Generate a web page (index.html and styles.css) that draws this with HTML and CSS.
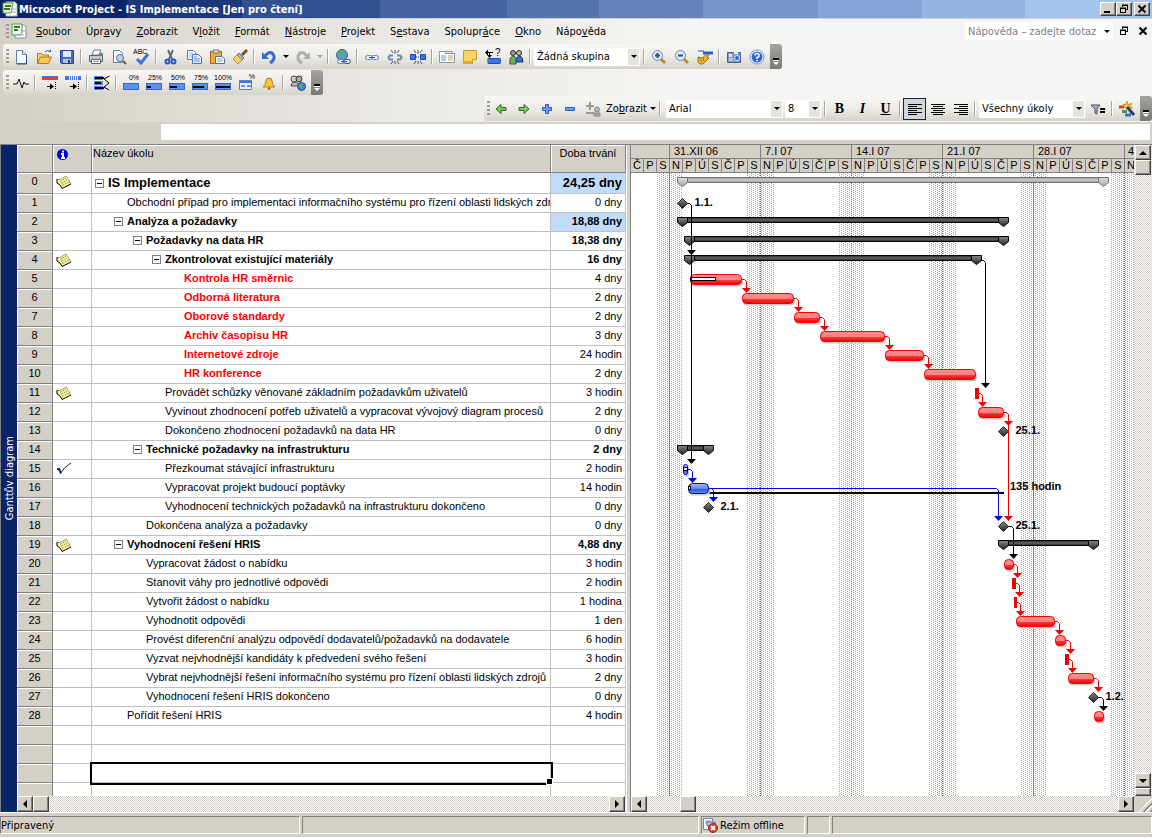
FILE: index.html
```html
<!DOCTYPE html>
<html lang="cs">
<head>
  <meta charset="UTF-8">
  <meta name="viewport" content="width=device-width, initial-scale=1.0">
  <title>Microsoft Project - IS Implementace [Jen pro čtení]</title>
  <link rel="stylesheet" href="styles.css">
</head>
<body>

<header class="titlebar">
  <svg class="icon" viewBox="0 0 16 16"><path d="M4 1h9l2 2v12H4z" fill="#fff" stroke="#a9b8a0"/><path d="M1 2h10l-2 10H1z" fill="#e8f4e0" stroke="#5c9a4a"/><path d="M3 5h6M2 8h6" stroke="#2f7a2a" stroke-width="2"/><path d="M9 8h5M9 11h5" stroke="#8aa" /></svg>
  <h1>Microsoft Project - IS Implementace [Jen pro čtení]</h1>
  <div class="window-buttons">
    <button type="button" aria-label="Minimalizovat"><svg viewBox="0 0 12 10"><path d="M2 8h6" stroke="#000" stroke-width="2"/></svg></button>
    <button type="button" aria-label="Obnovit"><svg viewBox="0 0 12 10"><path d="M4 1.500h6M4.500 1v2M9.500 1v5M8 5.500h2M2 4.500h6M2.500 4v5M7.500 4v5M2 8.500h6" stroke="#000" fill="none"/><path d="M4 1h6M2 4h6" stroke="#000"/></svg></button>
    <button type="button" class="close" aria-label="Zavřít"><svg viewBox="0 0 12 10"><path d="M2.500 1.500l7 7M9.500 1.500l-7 7" stroke="#000" stroke-width="2"/></svg></button>
  </div>
</header>

<div class="bars">
  <nav class="menubar">
    <span class="grip"></span>
    <svg class="icon menu-icon" viewBox="0 0 16 16"><path d="M4 2h9l2 2v11H4z" fill="#fff" stroke="#7a92b8"/><path d="M1 1h10v9l-2 2H1z" fill="#eef6e8" stroke="#5c9a4a"/><path d="M3 4h6M3 7h4" stroke="#2f7a2a" stroke-width="2"/><path d="M10 8h4M7 12h6" stroke="#8ba0c0"/></svg>
    <a href="#"><u>S</u>oubor</a>
    <a href="#">Úpr<u>a</u>vy</a>
    <a href="#"><u>Z</u>obrazit</a>
    <a href="#">V<u>l</u>ožit</a>
    <a href="#"><u>F</u>ormát</a>
    <a href="#"><u>N</u>ástroje</a>
    <a href="#"><u>P</u>rojekt</a>
    <a href="#">S<u>e</u>stava</a>
    <a href="#">Spolupr<u>á</u>ce</a>
    <a href="#"><u>O</u>kno</a>
    <a href="#">Nápo<u>v</u>ěda</a>
    <div class="menubar-right">
      <label class="combo help"><input type="text" placeholder="Nápověda – zadejte dotaz" aria-label="Nápověda"></label>
      <button type="button" class="flat" aria-label="Obnovit okno"><svg viewBox="0 0 12 10"><path d="M4 1.500h6M4.500 1v2M9.500 1v5M8 5.500h2M2 4.500h6M2.500 4v5M7.500 4v5M2 8.500h6" stroke="#000" fill="none"/><path d="M4 1h6M2 4h6" stroke="#000"/></svg></button>
      <button type="button" class="flat" aria-label="Zavřít okno"><svg viewBox="0 0 12 10"><path d="M2.500 1.500l7 7M9.500 1.500l-7 7" stroke="#000" stroke-width="2"/></svg></button>
    </div>
  </nav>

  <!-- standard toolbar -->
  <div class="toolbar">
    <span class="grip"></span>
    <button type="button" title="Nový"><svg class="icon" viewBox="0 0 16 16"><path d="M3.500 1.500h6l4 4v9h-10z" fill="#fff" stroke="#5b7fb5"/><path d="M9.500 1.500v4h4" fill="#dbe7f7" stroke="#5b7fb5"/><path d="M13.500 6v9H4" stroke="#2d4a7a" fill="none"/></svg></button>
    <button type="button" title="Otevřít"><svg class="icon" viewBox="0 0 16 16"><path d="M1.500 14V4.500h4l1 1.500h6v3" fill="#f7d774" stroke="#a8782a"/><path d="M1.500 14.500l3-6.500h11l-3 6.500z" fill="#ffc94f" stroke="#a8782a"/><path d="M9 3q3-3 5 0" fill="none" stroke="#3c6b9c"/><path d="M12 3h3V0z" fill="#3c6b9c"/></svg></button>
    <button type="button" title="Uložit"><svg class="icon" viewBox="0 0 16 16"><path d="M1.500 1.500h13v13h-12l-1-1z" fill="#4a68c8" stroke="#2a3e94"/><path d="M4 2h8v6H4z" fill="#dce8ff"/><path d="M4 10h8v4H4z" fill="#b8c4dc"/><path d="M9 11h2v3H9z" fill="#2a3e94"/></svg></button>
    <span class="sep"></span>
    <button type="button" title="Tisk"><svg class="icon" viewBox="0 0 16 16"><path d="M4 6l2-5h7l-2 5z" fill="#fff" stroke="#6d7c8c"/><path d="M1.500 6.500h13v6h-13z" fill="#c4c8d0" stroke="#5d6570"/><path d="M3.500 10.500h9v4h-9z" fill="#fff" stroke="#5d6570"/><path d="M11 4h4v3h-4z" fill="#4c9e40"/><path d="M5 12.500h6" stroke="#889"/></svg></button>
    <button type="button" title="Náhled"><svg class="icon" viewBox="0 0 16 16"><path d="M2.500 1.500h6l3 3v9h-9z" fill="#fff" stroke="#5b7fb5"/><circle cx="9" cy="9" r="3.500" fill="#bcd8f4" stroke="#556a8a"/><path d="M12 12l3 3" stroke="#775a30" stroke-width="2"/></svg></button>
    <button type="button" title="Pravopis"><svg class="icon" viewBox="0 0 16 16"><text x="-1" y="5" class="icon-text">ABC</text><path d="M3 10l4 4 7-9" fill="none" stroke="#3f6fd0" stroke-width="3"/></svg></button>
    <span class="sep"></span>
    <button type="button" title="Vyjmout"><svg class="icon" viewBox="0 0 16 16"><path d="M5 1l4 9M10 1L6 10" stroke="#5b6a80" stroke-width="2"/><circle cx="4.500" cy="12.500" r="2" fill="none" stroke="#2457c4" stroke-width="2"/><circle cx="10.500" cy="12.500" r="2" fill="none" stroke="#2457c4" stroke-width="2"/></svg></button>
    <button type="button" title="Kopírovat"><svg class="icon" viewBox="0 0 16 16"><path d="M1.500 1.500h6l2 2v7h-8z" fill="#fff" stroke="#4f76b8"/><path d="M3 4h4M3 6h5M3 8h5" stroke="#8fb0e0"/><path d="M6.500 5.500h6l3 3v6h-9z" fill="#e4eeff" stroke="#4f76b8"/><path d="M8 8h3M8 10h6M8 12h6" stroke="#6f96d8"/></svg></button>
    <button type="button" title="Vložit"><svg class="icon" viewBox="0 0 16 16"><path d="M1.500 2.500h11v12h-11z" fill="#f0a93c" stroke="#a0641c"/><path d="M4 1h6v3H4z" fill="#d8d8d8" stroke="#777"/><path d="M6.500 7.500h6l3 2v5h-9z" fill="#fff" stroke="#56709c"/><path d="M8 10h5M8 12h6" stroke="#7c98c8"/></svg></button>
    <button type="button" title="Kopírovat formát"><svg class="icon" viewBox="0 0 16 16"><path d="M15 1l-5 5" stroke="#7a4f28" stroke-width="3"/><path d="M7 4l5 5-2 2-5-5z" fill="#9ab4dc" stroke="#5a6c90"/><path d="M5 6l5 5-4 4-5-5z" fill="#f7d36a" stroke="#b98a2c"/></svg></button>
    <span class="sep"></span>
    <button type="button" title="Zpět"><svg class="icon" viewBox="0 0 16 16"><path d="M4 7q6-7 9 0 1 4-4 7" fill="none" stroke="#3a6ad4" stroke-width="3"/><path d="M1 3v7h7z" fill="#3a6ad4"/></svg></button>
    <button type="button" class="drop" aria-label="Zpět – seznam"></button>
    <button type="button" title="Znovu"><svg class="icon" viewBox="0 0 16 16"><path d="M12 7q-6-7-9 0-1 4 4 7" fill="none" stroke="#b0aeaa" stroke-width="3"/><path d="M15 3v7H8z" fill="#b0aeaa"/></svg></button>
    <button type="button" class="drop disabled" aria-label="Znovu – seznam"></button>
    <span class="sep"></span>
    <button type="button" title="Hypertextový odkaz"><svg class="icon" viewBox="0 0 16 16"><circle cx="7" cy="6" r="5.500" fill="#5a9ae0" stroke="#3a6090"/><path d="M3 4q2-4 5-2l1 3-3 1-1 3zM9 6l3-1-1 4z" fill="#5cb04c"/><rect x="2.500" y="10.500" width="7" height="4" rx="2" fill="#e4ecf6" stroke="#6080a8"/><rect x="8.500" y="10.500" width="7" height="4" rx="2" fill="#e4ecf6" stroke="#34517c"/><path d="M6 12.500h6" stroke="#34517c"/></svg></button>
    <span class="sep"></span>
    <button type="button" title="Propojit úkoly"><svg class="icon" viewBox="0 0 16 16"><rect x="1.500" y="6.500" width="7" height="4" rx="2" fill="#e4ecf6" stroke="#6f86ac"/><rect x="7.500" y="6.500" width="7" height="4" rx="2" fill="#e4ecf6" stroke="#6f86ac"/><path d="M5 8.500h6" stroke="#34517c"/></svg></button>
    <button type="button" title="Zrušit propojení"><svg class="icon" viewBox="0 0 16 16"><path d="M6 6.500H3q-3 2 0 4h3M10 6.500h3q3 2 0 4h-3" fill="none" stroke="#6f86ac" stroke-width="2"/><path d="M8 1v4M4 1l2 3M12 1l-2 3M8 15v-3M4 15l2-3M12 15l-2-3" stroke="#4a5668"/></svg></button>
    <button type="button" title="Rozdělit úkol"><svg class="icon" viewBox="0 0 16 16"><path d="M.500 5.500h5v5h-5zM10.500 5.500h5v5h-5z" fill="#3a76f0" stroke="#1b48b0"/><path d="M6 8h4" stroke="#1b48b0" stroke-dasharray="1 1"/><path d="M8 1v4M4 1l2 3M12 1l-2 3M8 15v-3M4 15l2-3M12 15l-2-3" stroke="#4a5668"/></svg></button>
    <span class="sep"></span>
    <button type="button" title="Informace o úkolu"><svg class="icon" viewBox="0 0 16 16"><path d="M.500 4.500v-2h6v2h9v9H.500z" fill="#fdfdfa" stroke="#8494ac"/><path d="M7 2.500h6v2" fill="none" stroke="#8494ac"/><path d="M2 7h5M2 9h5M2 11h5" stroke="#6f96d8"/><path d="M9 7h5M9 9h5M9 11h5" stroke="#c8a860"/></svg></button>
    <button type="button" title="Poznámky"><svg class="icon" viewBox="0 0 16 16"><path d="M1.500 1.500h13v9l-4 4h-9z" fill="#fbd45c" stroke="#c89a2c"/><path d="M1 12h9v3H1z" fill="#e0a838"/><path d="M10.500 14.500v-4h4" fill="#fff2b8" stroke="#c89a2c"/></svg></button>
    <button type="button" title="Přiřadit"><svg class="icon" viewBox="0 0 16 16"><path d="M3 3.500h5M4.500 3v4" stroke="#000"/><path d="M0 3.500l3-3v6zM2 6h5l-2.500 3z" fill="#000"/><text x="10" y="7" class="icon-text big">?</text><rect x="2.500" y="9.500" width="13" height="5" rx="1" fill="#3f74e8" stroke="#1b48b0"/><path d="M2 9v6" stroke="#f0e040"/></svg></button>
    <button type="button" title="Přiřadit zdroje"><svg class="icon" viewBox="0 0 16 16"><circle cx="5" cy="4" r="2.500" fill="#999" stroke="#333"/><circle cx="11" cy="4" r="2.500" fill="#bbb" stroke="#222"/><path d="M2 15q-1-8 4-8 3 1 2 8z" fill="#6bb05a" stroke="#2f5c2a"/><path d="M8 13q0-6 4-6 3 1 3 6z" fill="#3a6ad4" stroke="#1d3470"/></svg></button>
    <span class="sep"></span>
    <label class="combo group"><select aria-label="Seskupit podle"><option>Žádná skupina</option></select></label>
    <span class="sep"></span>
    <button type="button" title="Zvětšit"><svg class="icon" viewBox="0 0 16 16"><path d="M10 10l4 4" stroke="#c08a30" stroke-width="3"/><circle cx="6.500" cy="6.500" r="5" fill="#dce9fa" stroke="#7286a8"/><path d="M4 6.500h5M6.500 4v5" stroke="#2f4f90" stroke-width="2"/></svg></button>
    <button type="button" title="Zmenšit"><svg class="icon" viewBox="0 0 16 16"><path d="M10 10l4 4" stroke="#c08a30" stroke-width="3"/><circle cx="6.500" cy="6.500" r="5" fill="#dce9fa" stroke="#7286a8"/><path d="M4 6.500h5" stroke="#2f4f90" stroke-width="2"/></svg></button>
    <button type="button" title="Přejít na vybraný úkol"><svg class="icon" viewBox="0 0 16 16"><path d="M1 2h6" stroke="#7fa4e0" stroke-width="2"/><path d="M6 4h10" stroke="#2a5cd0" stroke-width="3"/><path d="M1 8l4 1 5-4 2 1-2 2 2 1-3 3-3 3H3l-2-2z" fill="#f2b632" stroke="#9c6c14"/><path d="M3 10l2 3M6 9l1 3" stroke="#9c6c14"/></svg></button>
    <span class="sep"></span>
    <button type="button" title="Kopírovat obrázek"><svg class="icon" viewBox="0 0 16 16"><path d="M1.500 3.500h13v10h-13z" fill="#7f9cc4" stroke="#44618e"/><path d="M3 5h3v3H3zM8 2h4v3H8z" fill="#e4ecf8"/><path d="M3 9h4v3H3z" fill="#b6c8e2"/><circle cx="11" cy="9" r="2.500" fill="#2a62d8" stroke="#dfe9f8"/></svg></button>
    <button type="button" title="Nápověda"><svg class="icon" viewBox="0 0 16 16"><circle cx="8" cy="8" r="7" fill="#fff" stroke="#6f92dc"/><circle cx="8" cy="8" r="5.500" fill="#2f66d8"/><path d="M6 6.500q0-2 2-2t2 2-2 2v1.500" fill="none" stroke="#fff" stroke-width="1.500"/><path d="M7 11h2v1H7z" fill="#fff"/></svg></button>
    <button type="button" class="overflow" aria-label="Možnosti panelu"></button>
  </div>

  <!-- tracking toolbar -->
  <div class="toolbar">
    <span class="grip"></span>
    <button type="button" title="Statistika projektu"><svg class="icon" viewBox="0 0 16 16"><path d="M0 9h4l2-5 3 9 2-6 1 2h4" fill="none" stroke="#111"/></svg></button>
    <span class="sep"></span>
    <button type="button" title="Aktualizovat podle plánu"><svg class="icon" viewBox="0 0 16 16"><rect y="1" width="16" height="4" fill="#3f74e8"/><path d="M0 3h16" stroke="#f03838" stroke-width="2"/><path d="M5 11.500h6" stroke="#000"/><path d="M8 8.500l4 3-4 3z"/><path d="M13.500 7v8" stroke="#000" stroke-dasharray="1 1"/></svg></button>
    <button type="button" title="Přeplánovat práci"><svg class="icon" viewBox="0 0 16 16"><rect y="1" width="4" height="4" fill="#3f74e8"/><path d="M5 3h7" stroke="#3f74e8" stroke-width="4" stroke-dasharray="1 1"/><rect x="13" y="1" width="3" height="4" fill="#3f74e8"/><path d="M5 11.500h6" stroke="#000"/><path d="M8 8.500l4 3-4 3z"/><path d="M13.500 7v8" stroke="#000" stroke-dasharray="1 1"/></svg></button>
    <span class="sep"></span>
    <button type="button" title="Přidat čáru postupu"><svg class="icon" viewBox="0 0 16 16"><path d="M0 1h9v4H0zM0 6h9v4H0zM0 11h9v4H0z" fill="#4d80e8"/><path d="M1 3h9M1 8h6M1 13h9" stroke="#000" stroke-width="2"/><path d="M15.500 1L10 4l5 4-5 4 5 3" fill="none" stroke="#000"/></svg></button>
    <span class="sep"></span>
    <button type="button" title="Hotovo 0%"><svg class="icon" viewBox="0 0 16 16"><text x="16" y="5" class="icon-text pct">0%</text><rect x=".500" y="8.500" width="15" height="6" fill="#5a90ee" stroke="#3567c8"/></svg></button>
    <button type="button" title="Hotovo 25%"><svg class="icon" viewBox="0 0 16 16"><text x="16" y="5" class="icon-text pct">25%</text><rect x=".500" y="8.500" width="15" height="6" fill="#5a90ee" stroke="#3567c8"/><path d="M1 12h4" stroke="#000" stroke-width="2"/></svg></button>
    <button type="button" title="Hotovo 50%"><svg class="icon" viewBox="0 0 16 16"><text x="16" y="5" class="icon-text pct">50%</text><rect x=".500" y="8.500" width="15" height="6" fill="#5a90ee" stroke="#3567c8"/><path d="M1 12h7" stroke="#000" stroke-width="2"/></svg></button>
    <button type="button" title="Hotovo 75%"><svg class="icon" viewBox="0 0 16 16"><text x="16" y="5" class="icon-text pct">75%</text><rect x=".500" y="8.500" width="15" height="6" fill="#5a90ee" stroke="#3567c8"/><path d="M1 12h11" stroke="#000" stroke-width="2"/></svg></button>
    <button type="button" title="Hotovo 100%"><svg class="icon" viewBox="0 0 16 16"><text x="17" y="5" class="icon-text pct">100%</text><rect x=".500" y="8.500" width="15" height="6" fill="#5a90ee" stroke="#3567c8"/><path d="M1 12h14" stroke="#000" stroke-width="2"/></svg></button>
    <button type="button" title="Aktualizovat úkoly"><svg class="icon" viewBox="0 0 16 16"><text x="17" y="4" class="icon-text pct">%</text><path d="M1.500 5.500h12v9h-12z" fill="#e8f0fc" stroke="#5f80b8"/><path d="M1 6h13v2H1z" fill="#3f74e8"/><path d="M3 10h4v2H3zM9 10h4v2H9z" fill="#6f96d8"/></svg></button>
    <button type="button" title="Připomenutí"><svg class="icon" viewBox="0 0 16 16"><path d="M2 12q3-2 3-6 0-3 3-3t3 3q0 4 3 6z" fill="#fcc63c" stroke="#b07c1c"/><circle cx="8" cy="13.500" r="1.500" fill="#b07c1c"/></svg></button>
    <span class="sep"></span>
    <button type="button" title="Spolupráce"><svg class="icon" viewBox="0 0 16 16"><circle cx="4" cy="4" r="3" fill="#ccc" stroke="#444"/><circle cx="9" cy="4" r="3" fill="#aaa" stroke="#333"/><path d="M1 11q0-4 4-4 3 0 4 4z" fill="#bbb" stroke="#555"/><circle cx="11.500" cy="11.500" r="4" fill="#3f7fe0" stroke="#2a4f90"/><path d="M9 10l3-2 1 3-2 3z" fill="#5cb04c"/></svg></button>
    <button type="button" class="overflow" aria-label="Možnosti panelu"></button>
  </div>

  <!-- formatting toolbar -->
  <div class="toolbar docked-right">
    <span class="grip"></span>
    <button type="button" title="Předsadit"><svg class="icon" viewBox="0 0 16 16"><path d="M3 8l5-4.500v3h5v3H8v3z" fill="#7cc860" stroke="#2f6a2a"/></svg></button>
    <button type="button" title="Odsadit"><svg class="icon" viewBox="0 0 16 16"><path d="M13 8L8 3.500v3H3v3h5v3z" fill="#7cc860" stroke="#2f6a2a"/></svg></button>
    <button type="button" title="Zobrazit dílčí úkoly"><svg class="icon" viewBox="0 0 16 16"><path d="M6.500 3.500h3v3h3v3h-3v3h-3v-3h-3v-3h3z" fill="#6f9cf0" stroke="#2f5cc0"/></svg></button>
    <button type="button" title="Skrýt dílčí úkoly"><svg class="icon" viewBox="0 0 16 16"><path d="M3.500 6.500h9v3h-9z" fill="#6f9cf0" stroke="#2f5cc0"/></svg></button>
    <button type="button" title="Skrýt přiřazení"><svg class="icon" viewBox="0 0 16 16"><path d="M5 1v8M1 5h8M1 12h8" stroke="#999" stroke-width="2"/><circle cx="12" cy="8.500" r="2.500" fill="#b8b6b2" stroke="#888"/><path d="M9 15v-3h6v3z" fill="#aaa" stroke="#888"/></svg></button>
    <button type="button" class="text-button"><span>Zo<u>b</u>razit</span><span class="triangle"></span></button>
    <span class="sep"></span>
    <label class="combo font"><select aria-label="Písmo"><option>Arial</option></select></label>
    <label class="combo size"><select aria-label="Velikost"><option>8</option></select></label>
    <span class="sep"></span>
    <button type="button" class="letter bold" title="Tučné">B</button>
    <button type="button" class="letter italic" title="Kurzíva">I</button>
    <button type="button" class="letter underline" title="Podtržené">U</button>
    <span class="sep"></span>
    <button type="button" class="pressed" title="Vlevo"><svg class="icon" viewBox="0 0 16 16"><path d="M1 3.500h14M1 5.500h9M1 7.500h14M1 9.500h9M1 11.500h14M1 13.500h9" stroke="#000"/></svg></button>
    <button type="button" title="Na střed"><svg class="icon" viewBox="0 0 16 16"><path d="M1 3.500h14M3 5.500h10M1 7.500h14M3 9.500h10M1 11.500h14M3 13.500h10" stroke="#000"/></svg></button>
    <button type="button" title="Vpravo"><svg class="icon" viewBox="0 0 16 16"><path d="M1 3.500h14M6 5.500h9M1 7.500h14M6 9.500h9M1 11.500h14M6 13.500h9" stroke="#000"/></svg></button>
    <span class="sep"></span>
    <label class="combo filter"><select aria-label="Filtr"><option>Všechny úkoly</option></select></label>
    <button type="button" title="Automatický filtr"><svg class="icon" viewBox="0 0 16 16"><path d="M1 4h9l-3 4v5l-2-1V8z" fill="#a8aeb8" stroke="#4d545e"/><path d="M10 8h5M10 11h5" stroke="#000" stroke-width="2"/></svg></button>
    <span class="sep"></span>
    <button type="button" title="Průvodce Ganttovým diagramem"><svg class="icon" viewBox="0 0 16 16"><path d="M0 6h5" stroke="#d83c34" stroke-width="3"/><path d="M3 10.500h5" stroke="#3c9c48" stroke-width="3"/><path d="M6 14h6" stroke="#3a6ad4" stroke-width="3"/><path d="M8 0l1 4 4-2-2 4 3 1H6L4 3l3 1z" fill="#fcc63c" stroke="#d89820"/><path d="M8 6l7 8" stroke="#2a3e6a" stroke-width="3"/></svg></button>
    <button type="button" class="overflow" aria-label="Možnosti panelu"></button>
  </div>
</div>

<div class="entrybar"><input type="text" aria-label="Zadání"></div>

<main class="workspace">
  <div class="viewbar"><span>Ganttův diagram</span></div>

  <section class="sheet">
    <div class="sheet-view">
      <table>
        <thead>
          <tr>
            <th class="col-id"></th>
            <th class="col-ind"><svg class="info" viewBox="0 0 11 11"><circle cx="5.500" cy="5.500" r="5.500" fill="#0000e0"/><path d="M4 5h2v4M4 9h4M5 2.500h2" stroke="#fff" stroke-width="2" fill="none"/></svg></th>
            <th class="col-name">Název úkolu</th>
            <th class="col-duration">Doba trvání</th>
          </tr>
        </thead>
        <tbody id="tasks"></tbody>
      </table>
    </div>
    <div class="scroll horizontal">
      <button type="button" class="arrow left" aria-label="Vlevo"></button>
      <span class="thumb"></span>
      <button type="button" class="arrow right" aria-label="Vpravo"></button>
    </div>
  </section>

  <div class="splitter"></div>

  <section class="chart">
    <div class="timescale">
      <div class="weeks" id="weeks"></div>
      <div class="days" id="days"></div>
    </div>
    <div class="canvas"><svg id="gantt"></svg></div>
    <div class="scroll horizontal">
      <button type="button" class="arrow left" aria-label="Vlevo"></button>
      <span class="thumb later"></span>
      <button type="button" class="arrow right" aria-label="Vpravo"></button>
    </div>
    <div class="scroll vertical">
      <button type="button" class="arrow up" aria-label="Nahoru"></button>
      <span class="thumb"></span>
      <button type="button" class="arrow down" aria-label="Dolů"></button>
      <span class="split-box"></span>
    </div>
    <div class="size-grip"></div>
  </section>
</main>

<footer class="statusbar">
  <span>Připravený</span>
  <span></span>
  <span><svg class="icon" viewBox="0 0 16 16"><path d="M1.500 1.500h9v11h-9z" fill="#fff" stroke="#6f86ac"/><path d="M3 4h6M3 6h6" stroke="#6f96d8"/><path d="M5 5h8l1 4H5z" fill="#c8d4e8" stroke="#556a8a"/><circle cx="11" cy="11" r="4.500" fill="#e03a20" stroke="#a02010"/><path d="M9 9l4 4M13 9l-4 4" stroke="#fff" stroke-width="2"/></svg>Režim offline</span>
  <span></span>
  <span></span>
</footer>

<script src="script.js"></script>
</body>
</html>
```
FILE: styles.css
```css
* {
  box-sizing: border-box;
}

body {
  margin: 0;
  height: 100vh;
  display: flex;
  flex-direction: column;
  overflow: hidden;
  background-color: #d4d0c8;
  font-family: Tahoma, "DejaVu Sans Condensed", "Liberation Sans", sans-serif;
  font-size: 11px;
  color: #000;
}

button,
input,
select {
  font: inherit;
  color: inherit;
  margin: 0;
  padding: 0;
  border: none;
  border-radius: 0;
  background: none;
}

.icon {
  width: 16px;
  height: 16px;
  flex: none;
  overflow: visible;
}

.icon-text {
  font-family: "Liberation Sans", Arial, sans-serif;
  font-size: 7px;
  fill: #000;
}

.icon-text.pct {
  text-anchor: end;
}

.icon-text.big {
  font-size: 10px;
}

/* title bar */
.titlebar {
  display: flex;
  align-items: center;
  flex: none;
  height: 19px;
  padding: 0 2px;
  border-bottom: 1px solid #d4d0c8;
  background: linear-gradient(to right, #0a246a 11%, #1c3879 11% 21%, #31508f 21% 33%, #44639f 33% 44%, #5475ac 44% 52%, #6482b8 52% 61%, #7595c7 61% 71%, #84a5d5 71% 80%, #94b4e1 80% 89%, #a2c4ee 89%);
}

.titlebar h1 {
  margin: 0 0 0 1px;
  font-size: 11px;
  font-weight: bold;
  color: #fff;
}

.window-buttons {
  display: flex;
  margin-left: auto;
}

.window-buttons button,
.arrow,
.thumb,
.split-box {
  border: 1px solid;
  border-color: #fff #404040 #404040 #fff;
  box-shadow: inset -1px -1px #808080;
  background-color: #d4d0c8;
}

.window-buttons button {
  width: 16px;
  height: 14px;
  display: flex;
  align-items: center;
  justify-content: center;
}

.window-buttons .close {
  margin-left: 2px;
}

.window-buttons svg,
.flat svg {
  width: 12px;
  height: 10px;
}

/* menu and toolbars */
.bars {
  flex: none;
  display: flex;
  flex-direction: column;
  align-items: flex-start;
  gap: 1px;
  padding-bottom: 1px;
  background: linear-gradient(to right, #d4d0c8, #ebe9e5 35%, #f5f4f2 60%);
}

.menubar {
  display: flex;
  align-items: center;
  align-self: stretch;
  height: 24px;
  padding-left: 6px;
}

.menu-icon {
  margin: 0 1px 0 2px;
}

.menubar a {
  padding: 0 7px 0 8px;
  color: #000;
  text-decoration: none;
}

.menubar-right {
  display: flex;
  align-items: center;
  margin-left: auto;
  padding-right: 0;
}

.flat {
  display: flex;
  width: 19px;
  justify-content: center;
}

.grip {
  width: 3px;
  height: 15px;
  flex: none;
  background: repeating-linear-gradient(#a09c94 0 2px, transparent 2px 4px);
}

.toolbar {
  display: flex;
  align-items: center;
  height: 25px;
  margin-left: 3px;
  padding-left: 3px;
  border-radius: 3px;
  background: linear-gradient(#f8f7f5, #ecebe6 50%, #d6d3cb);
}

.toolbar.docked-right {
  align-self: flex-end;
}

.toolbar button {
  width: 23px;
  height: 22px;
  display: flex;
  align-items: center;
  justify-content: center;
}

.sep {
  flex: none;
  width: 2px;
  height: 15px;
  margin: 0 2px;
  border-left: 1px solid #a6a6a6;
  border-right: 1px solid #fff;
}

.toolbar .drop {
  width: 11px;
}

.drop::after,
.triangle,
.combo::after {
  content: "";
  border: 3px solid transparent;
  border-top-color: #000;
  border-bottom-width: 0;
}

.drop.disabled::after {
  border-top-color: #a6a6a6;
}

.toolbar .text-button {
  width: auto;
  padding: 0 1px;
  gap: 3px;
}

.toolbar .pressed {
  border: 1px solid #0a246a;
  background-color: #d4d5d8;
}

.toolbar .letter {
  font-family: "Liberation Serif", serif;
  font-size: 14px;
  font-weight: bold;
}

.letter.italic {
  font-style: italic;
}

.letter.underline {
  text-decoration: underline;
}

.toolbar .overflow {
  flex-direction: column;
  justify-content: flex-end;
  gap: 1px;
  width: 12px;
  height: 25px;
  margin-left: 2px;
  padding-bottom: 4px;
  border-radius: 0 3px 3px 0;
  background: linear-gradient(#a5a4a1, #7a7976);
}

.overflow::before {
  content: "";
  width: 6px;
  height: 2px;
  border-bottom: 1px solid #fff;
  background-color: #000;
}

.overflow::after {
  content: "";
  border: 3px solid transparent;
  border-top-color: #fff;
  border-bottom: 0;
}

.combo {
  display: flex;
  align-items: center;
  height: 18px;
  margin: 0 1px;
  background-color: #fff;
  border: 1px solid #fff;
}

.combo::after {
  flex: none;
  margin: 0 2px 0 3px;
}

.combo select,
.combo input {
  flex: 1;
  min-width: 0;
  height: 16px;
  padding-left: 2px;
  appearance: none;
  outline: none;
}

.combo.group {
  width: 106px;
}

.combo.font {
  width: 117px;
  margin-left: 3px;
}

.combo.size {
  width: 36px;
}

.combo.filter {
  width: 106px;
}

.combo.group,
.combo.font,
.combo.size,
.combo.filter {
  background: linear-gradient(to left, #e4e2dd 11px, #fff 11px);
}

.combo.help {
  width: 148px;
}

.help input::placeholder {
  color: #808080;
  opacity: 1;
}

.entrybar {
  flex: none;
  height: 22px;
  padding: 2px 2px 4px 161px;
}

.entrybar input {
  display: block;
  width: 100%;
  height: 16px;
  background-color: #fff;
}

/* workspace */
.workspace {
  flex: 1;
  min-height: 0;
  display: grid;
  grid-template-columns: 17px minmax(0, 609fr) 5px minmax(0, 521fr);
  grid-template-rows: minmax(0, 1fr);
  border-top: 1px solid #808080;
  font-family: "Liberation Sans", Arial, sans-serif;
}

.viewbar {
  display: flex;
  align-items: center;
  justify-content: center;
  border-left: 1px solid #808080;
  background-color: #0a246a;
  color: #fff;
  font-family: Tahoma, "DejaVu Sans Condensed", sans-serif;
}

.viewbar span {
  writing-mode: vertical-rl;
  transform: rotate(180deg);
}

.sheet {
  display: flex;
  flex-direction: column;
}

.sheet-view {
  flex: 1;
  min-height: 0;
  overflow: hidden;
  background-color: #fff;
}

table {
  width: 100%;
  table-layout: fixed;
  border-collapse: separate;
  border-spacing: 0;
}

th,
td {
  height: 19px;
  padding: 0 3px;
  border-right: 1px solid #c0c0c0;
  border-bottom: 1px solid #c0c0c0;
  font-weight: normal;
  line-height: 16px;
  vertical-align: top;
  white-space: nowrap;
  overflow: hidden;
}

thead th {
  height: 28px;
  padding: 0 1px;
  text-align: left;
  border-color: #808080;
  background-color: #d4d0c8;
  box-shadow: inset 1px 1px #fff;
}

.col-id {
  width: 36px;
}

.col-ind {
  width: 39px;
}

.col-duration {
  width: 75px;
}

thead .col-duration {
  text-align: center;
}

tbody th {
  border-color: #808080;
  background-color: #d4d0c8;
  box-shadow: inset 1px 1px #fff;
  text-align: center;
}

.info {
  width: 11px;
  height: 11px;
  margin: 4px 0 0 3px;
}

.note,
.tick {
  display: block;
  width: 16px;
  height: 14px;
  margin-top: 2px;
}

.duration {
  text-align: right;
}

td.name {
  padding-right: 0;
}

.name div {
  display: flex;
  align-items: center;
  overflow: hidden;
}

.level-1 { padding-left: 19px; }
.level-2 { padding-left: 38px; }
.level-3 { padding-left: 57px; }
.level-4 { padding-left: 76px; }

.outline {
  flex: none;
  width: 9px;
  height: 9px;
  margin-right: 4px;
}

button.outline {
  border: 1px solid #808080;
  background: linear-gradient(#000, #000) center / 5px 1px no-repeat;
}

.summary td {
  font-weight: bold;
}

.critical .name {
  font-weight: bold;
  color: #f00;
}

.project td,
.project th {
  height: 21px;
}

.project .name,
.project .duration {
  font-size: 13px;
  vertical-align: middle;
}

.changed .duration {
  background-color: #c1dbfc;
}

.selected .name {
  position: relative;
  overflow: visible;
  outline: 2px solid #000;
}

.selected .name::after {
  content: "";
  position: absolute;
  right: -3px;
  bottom: -3px;
  width: 5px;
  height: 5px;
  border: 1px solid #fff;
  background-color: #000;
}

.splitter {
  border-left: 1px solid #fff;
  border-right: 1px solid #808080;
  background-color: #d4d0c8;
}

/* chart */
.chart {
  display: grid;
  grid-template-columns: minmax(0, 1fr) 18px;
  grid-template-rows: 28px minmax(0, 1fr) 16px;
}

.timescale {
  overflow: hidden;
  border-bottom: 1px solid #808080;
}

.weeks,
.days {
  display: flex;
  line-height: 13px;
}

.weeks {
  height: 14px;
  border-bottom: 1px solid #808080;
}

.weeks span {
  flex: none;
  width: 91px;
  padding-left: 4px;
  border-left: 1px solid #808080;
  white-space: nowrap;
}

.weeks span:first-child {
  width: 38px;
  border-left: none;
}

.weeks span:last-child {
  flex: 1;
  width: auto;
  padding-left: 3px;
}

.days span {
  flex: none;
  width: 13px;
  height: 13px;
  border-left: 1px solid #808080;
  text-align: center;
}

.days span:first-child {
  width: 12px;
  border-left: none;
}

.canvas {
  grid-row: 2;
  overflow: hidden;
  background-color: #fff;
}

.canvas svg {
  display: block;
  width: 100%;
  height: 100%;
}

.canvas text {
  font-size: 11px;
  font-weight: bold;
}

.band,
.bar-edge,
.week-line {
  shape-rendering: crispEdges;
}

/* scrollbars */
.scroll {
  display: flex;
  background: repeating-conic-gradient(#d4d0c8 0 25%, #fff 0 50%) 0 0 / 2px 2px;
}

.horizontal {
  flex: none;
  height: 16px;
}

.chart .horizontal {
  grid-row: 3;
}

.vertical {
  grid-column: 2;
  grid-row: 1 / 3;
  flex-direction: column;
  padding: 0 0 0 1px;
}

.arrow {
  flex: none;
  width: 16px;
  height: 16px;
  display: flex;
  align-items: center;
  justify-content: center;
}

.vertical .arrow,
.vertical .thumb {
  width: 16px;
  height: 15px;
}

.thumb {
  flex: none;
  width: 16px;
  height: 16px;
}

.thumb.later {
  margin-left: 33px;
}

.horizontal .right {
  margin-left: auto;
}

.sheet .right {
  margin-right: 1px;
}

.vertical .down {
  margin-top: auto;
}

.split-box {
  flex: none;
  width: 16px;
  height: 8px;
}

.arrow::after {
  content: "";
  border: 4px solid transparent;
}

.left::after {
  border-right-color: #000;
  border-left-width: 0;
}

.right::after {
  border-left-color: #000;
  border-right-width: 0;
}

.up::after {
  border-bottom-color: #000;
  border-top-width: 0;
}

.down::after {
  border-top-color: #000;
  border-bottom-width: 0;
}

.size-grip {
  grid-column: 2;
  grid-row: 3;
  background: repeating-linear-gradient(135deg, #d4d0c8 0 2px, #808080 2px 4px, #fff 4px 5px);
  clip-path: polygon(100% 10%, 100% 100%, 25% 100%);
}

/* status bar */
.statusbar {
  flex: none;
  display: grid;
  grid-template-columns: 300fr 397fr 104px 23px 320fr;
  gap: 2px;
  height: 26px;
  padding: 3px 0 4px;
  border-top: 1px solid #fff;
  border-bottom: 1px solid #fff;
}

.statusbar span {
  display: flex;
  align-items: center;
  gap: 2px;
  border: 1px solid;
  border-color: #808080 #fff #fff #808080;
}
```
FILE: script.js
```javascript
// [name, level, duration, type, indicator]
const tasks = [
  ['IS Implementace', 0, '24,25 dny', 'summary project changed', 'note'],
  ['Obchodní případ pro implementaci informačního systému pro řízení oblasti lidských zdrojů', 1, '0 dny', ''],
  ['Analýza a požadavky', 1, '18,88 dny', 'summary changed'],
  ['Požadavky na data HR', 2, '18,38 dny', 'summary'],
  ['Zkontrolovat existující materiály', 3, '16 dny', 'summary', 'note'],
  ['Kontrola HR směrnic', 4, '4 dny', 'critical'],
  ['Odborná literatura', 4, '2 dny', 'critical'],
  ['Oborové standardy', 4, '2 dny', 'critical'],
  ['Archiv časopisu HR', 4, '3 dny', 'critical'],
  ['Internetové zdroje', 4, '24 hodin', 'critical'],
  ['HR konference', 4, '2 dny', 'critical'],
  ['Provádět schůzky věnované základním požadavkům uživatelů', 3, '3 hodin', '', 'note'],
  ['Vyvinout zhodnocení potřeb uživatelů a vypracovat vývojový diagram procesů', 3, '2 dny', ''],
  ['Dokončeno zhodnocení požadavků na data HR', 3, '0 dny', ''],
  ['Technické požadavky na infrastrukturu', 2, '2 dny', 'summary'],
  ['Přezkoumat stávající infrastrukturu', 3, '2 hodin', '', 'tick'],
  ['Vypracovat projekt budoucí poptávky', 3, '14 hodin', ''],
  ['Vyhodnocení technických požadavků na infrastrukturu dokončeno', 3, '0 dny', ''],
  ['Dokončena analýza a požadavky', 2, '0 dny', ''],
  ['Vyhodnocení řešení HRIS', 1, '4,88 dny', 'summary', 'note'],
  ['Vypracovat žádost o nabídku', 2, '3 hodin', ''],
  ['Stanovit váhy pro jednotlivé odpovědi', 2, '2 hodin', ''],
  ['Vytvořit žádost o nabídku', 2, '1 hodina', ''],
  ['Vyhodnotit odpovědi', 2, '1 den', ''],
  ['Provést diferenční analýzu odpovědí dodavatelů/požadavků na dodavatele', 2, '6 hodin', ''],
  ['Vyzvat nejvhodnější kandidáty k předvedení svého řešení', 2, '3 hodin', ''],
  ['Vybrat nejvhodnější řešení informačního systému pro řízení oblasti lidských zdrojů', 2, '2 dny', ''],
  ['Vyhodnocení řešení HRIS dokončeno', 2, '0 dny', ''],
  ['Pořídit řešení HRIS', 1, '4 hodin', '']
];

const indicators = {
  note: '<svg class="note" viewBox="0 0 16 14"><path d="M1 4l3 1 7-4 1 3 3 5-9 4-2-3-3-2z" fill="#fbf68a"/><path d="M1 4.500l3 0 6-3.500 2 3 3 5" fill="none" stroke="#a0a080"/><path d="M1 4v4l3 2 2 3.500 9-4.500" fill="none" stroke="#000"/><path d="M4 6.500l6-3.500M5 8.500l6-3.500M6 10.500l7-3.500" stroke="#888" stroke-dasharray="2 1"/></svg>',
  tick: '<svg class="tick" viewBox="0 0 16 14"><path d="M1 7l2 0 2 4" fill="none" stroke="#0a246a" stroke-width="2"/><path d="M4 12q4-7 11-11" fill="none" stroke="#0a246a"/></svg>'
};

let rows = '';
tasks.forEach(([name, level, duration, type, indicator], id) => {
  const toggle = type.includes('summary')
    ? '<button type="button" class="outline" aria-label="Sbalit"></button>'
    : '<span class="outline"></span>';
  rows += `<tr class="${type}"><th>${id}</th><td>${indicators[indicator] || ''}</td>` +
    `<td class="name"><div class="level-${level}">${toggle}${name}</div></td><td class="duration">${duration}</td></tr>`;
});
['', '', 'selected', '', ''].forEach(type => {
  rows += `<tr class="${type}"><th></th><td></td><td class="name"></td><td></td></tr>`;
});
document.getElementById('tasks').innerHTML = rows;

// timescale
const DAY = 13;
const WEEK = 7 * DAY;
const FIRST_SUNDAY = 38;
document.getElementById('weeks').innerHTML =
  ['', '31.XII 06', '7.I 07', '14.I 07', '21.I 07', '28.I 07', '4'].map(w => `<span>${w}</span>`).join('');
document.getElementById('days').innerHTML =
  'ČPS'.concat('NPÚSČPS'.repeat(5), 'N').split('').map(d => `<span>${d}</span>`).join('');

// chart: x in pixels from the left edge of the canvas
const rowTop = row => row === 0 ? 0 : 21 + 19 * (row - 1);

const colors = { red: '#f00000', blue: '#0000e0', black: '#000' };

function grad(id, stops) {
  return `<linearGradient id="${id}" x2="0" y2="1">` +
    stops.map(([o, c]) => `<stop offset="${o}" stop-color="${c}"/>`).join('') + '</linearGradient>';
}

function summary(row, x1, x2, light) {
  const y = rowTop(row) + 4.5;
  const stroke = light ? '#707070' : '#000';
  const bar = light ? 'lightBar' : 'darkBar';
  const cap = light ? 'lightCap' : 'darkCap';
  const tip = x => `<path d="M${x - 5} ${y}h10v5l-5 4-5-4z" fill="url(#${cap})" stroke="${stroke}"/>`;
  return `<rect x="${x1}" y="${y}" width="${x2 - x1}" height="5" fill="url(#${bar})" stroke="${stroke}"/>` + tip(x1) + tip(x2);
}

function bar(row, x1, x2, color = 'red') {
  const y = rowTop(row) + 4.5;
  const w = x2 - x1 - 1;
  const r = Math.min(4, w / 2);
  return `<rect x="${x1 + 1}" y="${y + 2}" width="${w + 1}" height="10" rx="${r}" fill="#c8c8c8"/>` +
    `<rect x="${x1 + 0.5}" y="${y}" width="${w}" height="10" rx="${r}" fill="url(#${color}Bar)" stroke="${colors[color]}"/>`;
}

function sliver(row, x, w) {
  return `<rect class="bar-edge" x="${x}" y="${rowTop(row) + 4}" width="${w}" height="11" fill="#f00000"/>`;
}

function progress(row, x, w) {
  return `<rect x="${x + 0.5}" y="${rowTop(row) + 7.5}" width="${w}" height="3" fill="#fff" stroke="#000"/>`;
}

function milestone(row, x, label) {
  const y = rowTop(row) + 9.5;
  return `<path d="M${x} ${y - 5}l5 5-5 5-5-5z" fill="url(#darkCap)" stroke="#222"/>` +
    (label ? `<text x="${x + 12}" y="${y + 2}">${label}</text>` : '');
}

function link(from, x1, x2, to, color = 'red') {
  const y1 = rowTop(from) + 9.5;
  const y2 = rowTop(to) + 4;
  const c = colors[color];
  return `<path d="M${x1} ${y1}H${x2 - 2}l2 2V${y2 - 3}" fill="none" stroke="${c}"/>` +
    `<path d="M${x2 - 4.5} ${y2 - 5}h9l-4.5 5z" fill="${c}"/>`;
}

let art = '<defs>' +
  '<pattern id="dots" width="4" height="2" patternUnits="userSpaceOnUse"><rect width="1" height="1" fill="#a8a8a8"/><rect x="2" y="1" width="1" height="1" fill="#a8a8a8"/></pattern>' +
  grad('redBar', [[0, '#ff9090'], [0.5, '#ff8080'], [0.55, '#f04040'], [1, '#f00000']]) +
  grad('blueBar', [[0, '#b0b8ff'], [0.5, '#6c84f0'], [0.55, '#3050e0'], [1, '#50a0f0']]) +
  grad('darkBar', [[0, '#222'], [0.5, '#666'], [1, '#222']]) +
  grad('darkCap', [[0, '#888'], [1, '#222']]) +
  grad('lightBar', [[0, '#999'], [0.5, '#ccc'], [1, '#999']]) +
  grad('lightCap', [[0, '#ddd'], [1, '#aaa']]) +
  '</defs>';

for (let i = 0; i < 12; i++) {
  const x = FIRST_SUNDAY + i * WEEK;
  art += `<rect class="band" x="${x - DAY}" y="0" width="${2 * DAY + 1}" height="100%" fill="url(#dots)"/>`;
  art += `<line class="week-line" x1="${x + 0.5}" x2="${x + 0.5}" y1="0" y2="100%" stroke="#606060" stroke-dasharray="1 1"/>`;
}

art += summary(0, 51.5, 472.5, true) + summary(2, 51.5, 372.5) + summary(3, 58.5, 372.5) +
  summary(4, 58.5, 345.5) + summary(14, 51.5, 77.5) + summary(19, 372.5, 462.5);

// slack behind row 16
art += '<rect x="78" y="319" width="295" height="2"/>';

art += bar(5, 59, 111) + progress(5, 59, 25) + bar(6, 111, 163) + bar(7, 163, 189) + bar(8, 189, 254) +
  bar(9, 254, 293) + bar(10, 293, 345) + sliver(11, 344, 4) + bar(12, 347, 373) +
  bar(15, 52, 57, 'blue') + progress(15, 52, 4) + bar(16, 57, 78, 'blue') + progress(16, 57, 2) +
  bar(20, 373, 383) + sliver(21, 381, 4) + sliver(22, 383, 3) + bar(23, 385, 424) + bar(24, 424, 435) +
  sliver(25, 434, 4) + bar(26, 437, 463) + bar(28, 463, 473);

art += milestone(1, 51.5, '1.1.') + milestone(13, 372.5, '25.1.') + milestone(17, 77.5, '2.1.') +
  milestone(18, 372.5, '25.1.') + milestone(27, 462.5, '1.2.');
art += '<text x="379" y="317">135 hodin</text>';

art += link(1, 56, 60.5, 4, 'black') + link(1, 56, 60.5, 15, 'black') + link(4, 350, 354.5, 11, 'black') +
  link(5, 111, 115.5, 6) + link(6, 163, 167.5, 7) + link(7, 189, 193.5, 8) + link(8, 254, 258.5, 9) +
  link(9, 293, 297.5, 10) + link(11, 348, 351.5, 12) + link(12, 373, 377.5, 13) + link(12, 373, 377.5, 18) +
  link(15, 57, 61.5, 16, 'blue') + link(16, 78, 82.5, 17, 'blue') + link(16, 78, 367.5, 18, 'blue') +
  link(18, 377, 382.5, 20, 'black') + link(20, 383, 386.5, 21) + link(21, 385, 388.5, 22) +
  link(22, 386, 389.5, 23) + link(23, 424, 428.5, 24) + link(24, 435, 439.5, 25) + link(25, 438, 441.5, 26) +
  link(26, 463, 467.5, 27) + link(27, 467, 472.5, 28, 'black');

document.getElementById('gantt').innerHTML = art;
```
